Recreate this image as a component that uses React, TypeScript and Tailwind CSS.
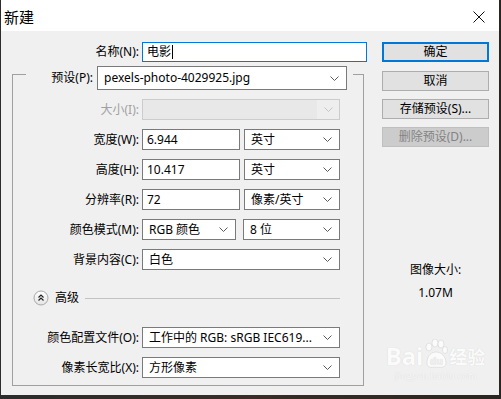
// New document dialog (Photoshop 新建)

function Chevron({ disabled = false }: { disabled?: boolean }) {
  return (
    <svg width="9" height="5" viewBox="0 0 9 5" className="shrink-0">
      <polyline
        points="0.5,0.5 4.5,4.5 8.5,0.5"
        fill="none"
        stroke={disabled ? '#c4c4c4' : '#5a5a5a'}
        strokeWidth="1"
      />
    </svg>
  )
}

function Select({ value, className }: { value: string; className: string }) {
  return (
    <div className={`flex items-center justify-between border border-[#7a7a7a] bg-white pl-[6px] pr-[7px] ${className}`}>
      <span className="whitespace-nowrap">{value}</span>
      <Chevron />
    </div>
  )
}

function TextInput({ value, className }: { value: string; className: string }) {
  return (
    <div className={`flex items-center border border-[#7a7a7a] bg-white pl-[4px] ${className}`}>
      {value}
    </div>
  )
}

function Row({ label, children, className = '', disabled = false }: {
  label: string
  children: React.ReactNode
  className?: string
  disabled?: boolean
}) {
  return (
    <div className={`flex items-center h-[21px] ${className}`}>
      <span className={`w-[126px] text-right ${disabled ? 'text-[#a0a0a0]' : ''}`}>{label}</span>
      <div className="ml-[3px] flex items-center h-full">{children}</div>
    </div>
  )
}

function Button({ label, primary = false, disabled = false, className = '' }: {
  label: string
  primary?: boolean
  disabled?: boolean
  className?: string
}) {
  const tone = primary
    ? 'border-2 border-[#0078d7] bg-[#e1e1e1]'
    : disabled
      ? 'border border-[#bfbfbf] bg-[#cccccc] text-[#838383]'
      : 'border border-[#adadad] bg-[#e1e1e1]'
  return (
    <div className={`h-[20px] w-[107px] flex items-center justify-center ${tone} ${className}`}>
      {label}
    </div>
  )
}

function CollapseIcon() {
  return (
    <svg width="16" height="16" viewBox="0 0 16 16" className="shrink-0">
      <defs>
        <linearGradient id="knob" x1="0" y1="0" x2="0" y2="1">
          <stop offset="0" stopColor="#ffffff" />
          <stop offset="1" stopColor="#e4e4e4" />
        </linearGradient>
      </defs>
      <circle cx="8" cy="8" r="7" fill="url(#knob)" stroke="#a8a8a8" strokeWidth="1" />
      <polyline points="5.5,7.5 8,5 10.5,7.5" fill="none" stroke="#222" strokeWidth="1.2" />
      <polyline points="5.5,10.5 8,8 10.5,10.5" fill="none" stroke="#222" strokeWidth="1.2" />
    </svg>
  )
}

export default function App() {
  return (
    <div className="w-[501px] h-[399px] overflow-hidden bg-gradient-to-r from-[#2c2c2c] via-[#3a2e26] to-[#2a2520] font-['Noto_Sans','Noto_Sans_CJK_SC',sans-serif] text-[12px] leading-[16px] text-black">
      <div className="ml-[1px] w-[498px] h-[395px] flex flex-col bg-[#f0f0f0]">

        {/* Title bar */}
        <div className="h-[31px] shrink-0 bg-white flex items-center justify-between pl-[3px] pr-[14px]">
          <span className="text-[15px] leading-[20px] pt-[2px]">新建</span>
          <svg width="12" height="12" viewBox="0 0 12 12" className="mt-[2px]">
            <path d="M0.5 0.5 L11.5 11.5 M11.5 0.5 L0.5 11.5" stroke="#111" strokeWidth="1" />
          </svg>
        </div>

        <div className="flex flex-1">

          {/* Left — fields */}
          <div className="w-[380px] pt-[11px] flex flex-col">
            <div className="flex items-center h-[20px]">
              <span className="w-[138px] text-right">名称(N):</span>
              <div className="ml-[3px] w-[225px] h-[20px] flex items-center border border-[#0078d7] bg-white pl-[4px]">
                电影
                <span className="ml-[1px] w-px h-[14px] bg-black" />
              </div>
            </div>

            <div className="ml-[11px] mt-[12px] w-[352px] h-[312px] border border-[#a0a0a0] flex flex-col">
              <div className="-mt-[9px] ml-[13px] w-[327px] h-[24px] bg-[#f0f0f0] flex items-center">
                <span className="w-[67px] text-right">预设(P):</span>
                <Select value="pexels-photo-4029925.jpg" className="ml-[4px] w-[250px] h-[24px]" />
              </div>

              <Row label="大小(I):" disabled className="mt-[9px]">
                <div className="w-[198px] h-[21px] flex border border-[#cccccc] bg-[#e8e8e8]">
                  <div className="flex-1" />
                  <div className="w-[22px] flex items-center justify-center bg-[#eeeeee]">
                    <Chevron disabled />
                  </div>
                </div>
              </Row>

              <Row label="宽度(W):" className="mt-[9px]">
                <TextInput value="6.944" className="w-[98px] h-[21px]" />
                <Select value="英寸" className="ml-[4px] w-[96px] h-[21px]" />
              </Row>

              <Row label="高度(H):" className="mt-[9px]">
                <TextInput value="10.417" className="w-[98px] h-[21px]" />
                <Select value="英寸" className="ml-[4px] w-[96px] h-[21px]" />
              </Row>

              <Row label="分辨率(R):" className="mt-[9px]">
                <TextInput value="72" className="w-[98px] h-[21px]" />
                <Select value="像素/英寸" className="ml-[4px] w-[96px] h-[21px]" />
              </Row>

              <Row label="颜色模式(M):" className="mt-[9px]">
                <Select value="RGB 颜色" className="w-[94px] h-[21px]" />
                <Select value="8 位" className="ml-[7px] w-[97px] h-[21px]" />
              </Row>

              <Row label="背景内容(C):" className="mt-[9px]">
                <Select value="白色" className="w-[198px] h-[21px]" />
              </Row>

              <div className="mt-[20px] ml-[20px] h-[16px] flex items-center">
                <CollapseIcon />
                <span className="ml-[6px]">高级</span>
                <div className="ml-[6px] w-[255px] border-t border-[#c2c2c2]" />
              </div>

              <Row label="颜色配置文件(O):" className="mt-[21px]">
                <Select value="工作中的 RGB: sRGB IEC619..." className="w-[198px] h-[21px]" />
              </Row>

              <Row label="像素长宽比(X):" className="mt-[9px]">
                <Select value="方形像素" className="w-[198px] h-[21px]" />
              </Row>
            </div>
          </div>

          {/* Right — buttons and size readout */}
          <div className="w-[107px] ml-[1px] pt-[11px] flex flex-col">
            <Button label="确定" primary />
            <Button label="取消" className="mt-[9px]" />
            <Button label="存储预设(S)..." className="mt-[8px]" />
            <Button label="删除预设(D)..." disabled className="mt-[8px]" />

            <div className="mt-[115px] text-center">图像大小:</div>
            <div className="mt-[7px] text-center">1.07M</div>

            {/* faint watermark */}
            <div className="mt-[38px] flex items-end justify-center text-[#fbfbfb] [text-shadow:0_0_1px_#cfcfcf]">
              <span className="text-[24px] leading-[26px] font-bold">Bai</span>
              <svg width="24" height="30" viewBox="0 0 24 30" className="mx-[1px]">
                <g fill="#fbfbfb" stroke="#d4d4d4" strokeWidth="0.6">
                  <ellipse cx="5" cy="8" rx="3" ry="4" />
                  <ellipse cx="11" cy="4" rx="3" ry="4" />
                  <ellipse cx="17" cy="5" rx="3" ry="4" />
                  <ellipse cx="21" cy="11" rx="2.5" ry="3.5" />
                  <path d="M3 24 C3 16 8 13 12 13 C17 13 22 17 22 24 C22 28 18 29 12 28 C6 29 3 28 3 24 Z" />
                </g>
                <text x="12.5" y="26" textAnchor="middle" fontSize="10" fontWeight="bold" fill="#f0f0f0">du</text>
              </svg>
              <span className="text-[18px] leading-[24px] font-bold">经验</span>
            </div>
            <div className="text-center text-[11px] leading-[12px] text-[#f8f8f8] [text-shadow:0_0_1px_#d0d0d0] font-['Liberation_Serif',serif]">
              jingyan.baidu.com
            </div>
          </div>

        </div>
      </div>
    </div>
  )
}
